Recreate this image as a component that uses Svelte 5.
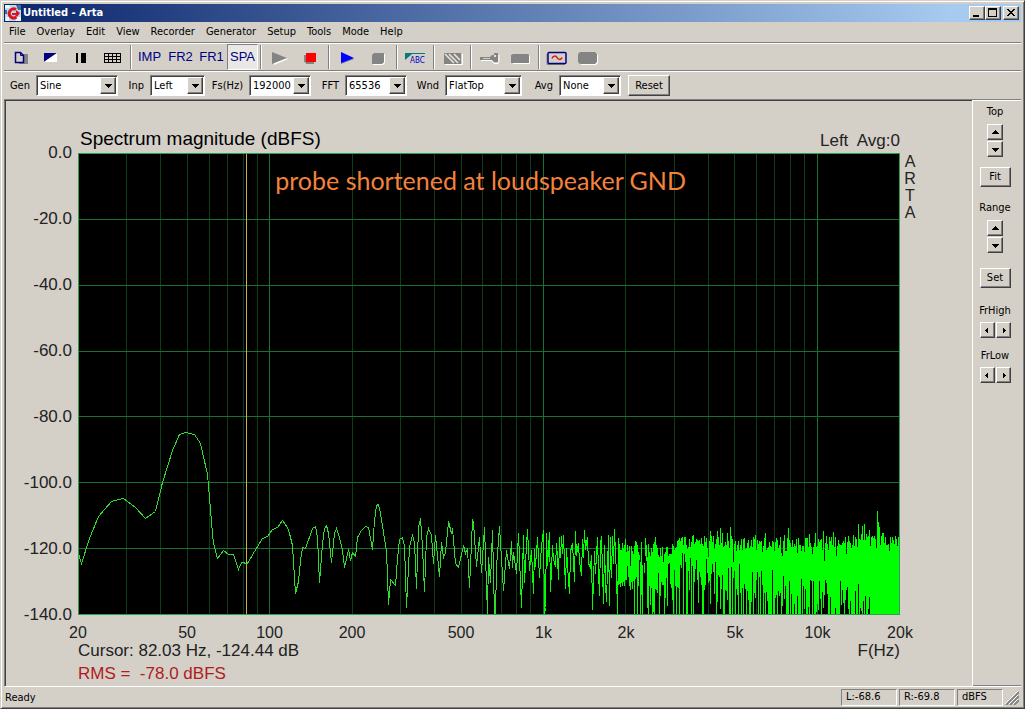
<script lang="ts">
  const menus = ['File', 'Overlay', 'Edit', 'View', 'Recorder', 'Generator', 'Setup', 'Tools', 'Mode', 'Help'];

  const combos = [
    { id: 'gen', label: 'Gen', options: ['Sine', 'Two Sine', 'Pink PN', 'White PN'] },
    { id: 'inp', label: 'Inp', options: ['Left', 'Right'] },
    { id: 'fs', label: 'Fs(Hz)', options: ['192000', '96000', '48000', '44100'] },
    { id: 'fft', label: 'FFT', options: ['65536', '32768', '16384'] },
    { id: 'wnd', label: 'Wnd', options: ['FlatTop', 'Hanning', 'Uniform'] },
    { id: 'avg', label: 'Avg', options: ['None', 'Linear', 'Exp'] },
  ];

  let mode = $state('SPA');

  const W = 821;
  const H = 461;

  const freqX = (f: number) => (Math.log10(f / 20) / 3) * W;

  const yTicks = ['0.0', '-20.0', '-40.0', '-60.0', '-80.0', '-100.0', '-120.0', '-140.0'];
  const xTicks = [
    { f: 20, text: '20' },
    { f: 50, text: '50' },
    { f: 100, text: '100' },
    { f: 200, text: '200' },
    { f: 500, text: '500' },
    { f: 1000, text: '1k' },
    { f: 2000, text: '2k' },
    { f: 5000, text: '5k' },
    { f: 10000, text: '10k' },
    { f: 20000, text: '20k' },
  ];

  const gridFreqs: number[] = [];
  for (const decade of [10, 100, 1000, 10000]) {
    for (let n = 1; n < 10; n++) {
      const f = n * decade;
      if (f > 20 && f < 20000) gridFreqs.push(f);
    }
  }
  const isDecade = (f: number) => f === 100 || f === 1000 || f === 10000;

  // low frequencies: single bins, in plot units
  const lowTrace =
    '0,400 3,410 11,385 20,363 33,348 40,346 45,345 57,354 67,365 77,358 84,329 94,297 101,281 107,279 116,281 ' +
    '122,290 129,321 134,380 135,390 139,405 145,397 150,401 155,401 160,416 163,409 169,410 176,398 184,385 ' +
    '189,383 194,376 199,374 204,367 209,374 211,380 214,392 217,440 220,428 222,407 224,394 227,395 234,375 ' +
    '237,373 239,384 241,429 244,390 246,375 248,372 250,380 253,409 256,380 258,375 261,384 264,397 266,414 ' +
    '270,396 272,407 274,399 277,403 279,384 283,377 287,373 290,374 294,396 296,367 298,352 300,351 302,360 ' +
    '305,379 308,397 310,451 312,426 317,432 319,405 321,386 324,384 326,392 328,454 331,394 334,381 336,389 ' +
    '338,435 340,374 342,365 344,394 346,438 348,384 350,375 353,382 355,410 357,382 361,423 363,389 365,404 ' +
    '367,399 370,368 373,380 374,375 377,410 380,414 385,392 387,400 389,395 391,434 394,367 395,369 398,413 ' +
    '401,384 403,419 406,374 409,461 410,404 412,429 414,377 416,461 417,461 418,414 421,373 425,437 428,397 ' +
    '431,415 433,388 434,414 435,399 438,420 440,380';

  // dense part before the bins merge into a solid band
  const midTrace =
    '440,380 443,454 445,382 446,429 448,392 449,376 451,417 453,397 455,440 456,396 457,413 459,384 461,424 ' +
    '463,392 465,377 466,461 467,454 468,380 469,412 471,379 472,438 474,392 475,406 477,413 478,390 479,404 ' +
    '480,426 481,384 482,404 483,383 484,400 485,382 487,435 488,395 489,412 491,440 492,398 494,390 496,428 ' +
    '497,378 498,402 500,390 501,408 503,422 504,386 505,404 506,377 507,396 509,384 510,410 512,414 513,402 ' +
    '514,456 516,398 517,420 519,384 520,418 521,442 522,390 523,383 525,450 526,392 527,430 528,448 530,382 ' +
    '531,452 532,384 533,424 534,383 535,410 536,376 537,400 538,420 539,461 540,396';

  // [x, typical top, typical bottom, share of columns that reach the floor]
  const bands = [
    [540, 390, 420, 0.22],
    [562, 395, 412, 0.14],
    [580, 399, 424, 0.2],
    [592, 397, 412, 0.3],
    [606, 389, 408, 0.22],
    [630, 388, 412, 0.22],
    [660, 390, 424, 0.28],
    [690, 391, 428, 0.38],
    [720, 391, 436, 0.45],
    [760, 388, 440, 0.55],
    [790, 385, 446, 0.65],
    [822, 386, 456, 0.85],
  ];

  let seed = 4711;
  function rnd() {
    seed = (seed * 16807) % 2147483647;
    return seed / 2147483647;
  }

  function noisePath() {
    let d = '';
    let b = 0;
    for (let x = 540; x <= W; x++) {
      while (x >= bands[b + 1][0]) b++;
      const [x0, t0, b0, p0] = bands[b];
      const [x1, t1, b1, p1] = bands[b + 1];
      const k = (x - x0) / (x1 - x0);
      let top = t0 + (t1 - t0) * k + (rnd() - 0.5) * 14;
      if (rnd() < 0.24) top -= rnd() * 14;
      if (rnd() < 0.06) top += 12;
      let bottom = b0 + (b1 - b0) * k + (rnd() - 0.4) * 36;
      if (rnd() < 0.25) bottom += 18;
      if (rnd() < p0 + (p1 - p0) * k) bottom = H;
      d += `M${x} ${Math.round(top)}V${Math.round(Math.min(H, bottom))}`;
    }
    return d + 'M799 357V400M800 368V400M801 373V400M710 374V400';
  }
  const noise = noisePath();

  const cursorX = freqX(82.03);
</script>

{#snippet arrow(dir: string)}
  <svg class="arrow" viewBox="0 0 7 7" width="7" height="7" shape-rendering="crispEdges" aria-hidden="true">
    {#if dir === 'up'}
      <path d="M3 1h1v1h1v1h1v1h1v1H0V4h1V3h1V2h1z" />
    {:else if dir === 'down'}
      <path d="M0 2h7v1H6v1H5v1H4v1H3V5H2V4H1V3H0z" />
    {:else if dir === 'left'}
      <path d="M1 3h1V2h1V1h1v5H3V5H2V4H1z" />
    {:else}
      <path d="M3 1h1v1h1v1h1v1H5v1H4v1H3z" />
    {/if}
  </svg>
{/snippet}

<div class="window">
  <header class="titlebar">
    <svg class="logo" viewBox="0 0 16 16" width="16" height="16" aria-hidden="true">
      <rect width="16" height="16" fill="#b8dcea" />
      <path d="M0 0h5v3H0zM11 12h5v4h-5zM1 12h3v4H1z" fill="#eef8fc" />
      <path d="M11 0h5v5h-3zM0 5h2v4H0z" fill="#3b6d9c" />
      <path d="M11 4.500A4.500 4.500 0 1 0 11.500 12" fill="none" stroke="#e01020" stroke-width="3" />
      <path d="M7 8h4V5l4 3-3 4-2-2H7z" fill="#e01020" />
    </svg>
    <h1>Untitled - Arta</h1>
    <div class="sysbuttons">
      <button type="button" aria-label="Minimize">
        <svg viewBox="0 0 12 10" width="12" height="10" shape-rendering="crispEdges"><path d="M2 7h6v2H2z" /></svg>
      </button>
      <button type="button" aria-label="Maximize">
        <svg viewBox="0 0 12 10" width="12" height="10" shape-rendering="crispEdges"><path d="M1 0h9v9H1zM2 2v6h7V2z" fill-rule="evenodd" /></svg>
      </button>
      <button type="button" class="close" aria-label="Close">
        <svg viewBox="0 0 12 10" width="12" height="10" shape-rendering="crispEdges">
          <path d="M2 1h2v1h1v1h2V2h1V1h2v1H9v1H8v1H7v1h1v1h1v1h1v1H8V7H7V6H5v1H4v1H2V7h1V6h1V5h1V4H4V3H3V2H2z" />
        </svg>
      </button>
    </div>
  </header>

  <nav class="menubar">
    {#each menus as item}
      <button type="button">{item}</button>
    {/each}
  </nav>

  <div class="toolbar">
    <button type="button" aria-label="Copy">
      <svg viewBox="0 0 24 16" width="24" height="16">
        <path d="M11 4h9v10h-9z" fill="#848484" />
        <path d="M7.500 2.500h5l3 3v7h-8z" fill="#d4d0c8" stroke="#000080" stroke-width="1.500" />
        <path d="M12.500 2.500v3h3" fill="none" stroke="#000080" />
      </svg>
    </button>
    <button type="button" aria-label="Black and white colors">
      <svg viewBox="0 0 24 16" width="24" height="16">
        <path d="M5 3h13L5 12z" fill="#000080" />
        <path d="M18 3v9H5z" fill="#fff" />
      </svg>
    </button>
    <button type="button" aria-label="Line width">
      <svg viewBox="0 0 24 16" width="24" height="16" shape-rendering="crispEdges">
        <path d="M6 3h2v10H6zM11 3h5v10h-5z" />
      </svg>
    </button>
    <button type="button" aria-label="Grid">
      <svg viewBox="0 0 24 16" width="24" height="16" shape-rendering="crispEdges">
        <path d="M3.500 3.500h16v9h-16zM3.500 6.500h16M3.500 9.500h16M7.500 3.500v9M11.500 3.500v9M15.500 3.500v9" fill="none" stroke="#000" />
      </svg>
    </button>
    <i class="sep"></i>
    {#each ['IMP', 'FR2', 'FR1', 'SPA'] as m}
      <button type="button" class="mode" class:pressed={mode === m} onclick={() => (mode = m)}>{m}</button>
    {/each}
    <i class="sep"></i>
    <button type="button" aria-label="Record">
      <svg viewBox="0 0 24 16" width="24" height="16">
        <path d="M5 3l15 6-14 6z" fill="#fff" />
        <path d="M4 2l15 6-15 6z" fill="#848484" />
      </svg>
    </button>
    <button type="button" aria-label="Stop">
      <svg viewBox="0 0 24 16" width="24" height="16" shape-rendering="crispEdges">
        <path d="M5 5h10v9H7l-2-2z" fill="#848484" />
        <path d="M7 3h10v9H7z" fill="#f00" />
      </svg>
    </button>
    <i class="sep"></i>
    <button type="button" aria-label="Generator on">
      <svg viewBox="0 0 24 16" width="24" height="16">
        <path d="M5 3l13 6-13 5z" fill="#7478a8" />
        <path d="M5 2l13 6-13 5z" fill="#00f" />
      </svg>
    </button>
    <button type="button" aria-label="Generator off">
      <svg viewBox="0 0 24 16" width="24" height="16">
        <path d="M8 4h10v9l-2 2H6v-1h9l2-2V5z" fill="#fff" />
        <path d="M7 3h10v9l-2 2H5V5z" fill="#848484" />
      </svg>
    </button>
    <i class="sep"></i>
    <button type="button" aria-label="Legend">
      <svg viewBox="0 0 24 16" width="24" height="16">
        <path d="M1 3h20v1H8l-7 6z" fill="#007c7c" />
        <text x="6" y="13" class="abc">ABC</text>
      </svg>
    </button>
    <i class="sep"></i>
    <button type="button" aria-label="Overlay">
      <svg viewBox="0 0 24 16" width="24" height="16">
        <path d="M4 14.500h17.500V4" stroke="#fff" fill="none" />
        <path d="M3 3h17v11H3z" fill="#848484" />
        <path d="M4 4l9 9M8 4l9 9M13 4l6 6" stroke="#e8e6e0" stroke-width="1.500" />
        <path d="M3 7l7 7H3z" fill="#848484" />
      </svg>
    </button>
    <i class="sep"></i>
    <button type="button" aria-label="Level">
      <svg viewBox="0 0 24 16" width="24" height="16">
        <path d="M3 10.500h11l2 3h4l1-2V5" stroke="#fff" fill="none" />
        <path d="M2 7h10l2-2h2V3h4v9h-4l-2-2H2z" fill="#848484" />
        <path d="M5 8.500h7" stroke="#d4d0c8" />
        <circle cx="17" cy="6" r="1" fill="#fff" />
      </svg>
    </button>
    <button type="button" aria-label="Calibrate">
      <svg viewBox="0 0 24 16" width="24" height="16">
        <path d="M4 5h16l1 2v7H4z" fill="#fff" />
        <path d="M2 5l2-1h15l1 1v8H2z" fill="#848484" />
      </svg>
    </button>
    <i class="sep"></i>
    <button type="button" aria-label="Signal generator setup">
      <svg viewBox="0 0 24 16" width="24" height="16">
        <path d="M1 4v10.500h18" stroke="#848484" fill="none" />
        <rect x="2" y="2.500" width="18" height="11" rx="1" fill="#d4d0c8" stroke="#000080" stroke-width="1.500" />
        <path d="M6 8.500c1-3 4-3 5-1s4 3 5 0" fill="none" stroke="#e01010" stroke-width="1.500" />
      </svg>
    </button>
    <button type="button" aria-label="Recorder setup">
      <svg viewBox="0 0 24 16" width="24" height="16">
        <path d="M4 3h15l2 2v8l-2 2H4z" fill="#fff" />
        <path d="M1 4l2-2h15l2 2v8l-2 2H3l-2-2z" fill="#848484" />
      </svg>
    </button>
  </div>

  <form class="controls">
    {#each combos as c}
      <label for={c.id}>{c.label}</label>
      <span class="combo">
        <select id={c.id}>
          {#each c.options as o}
            <option>{o}</option>
          {/each}
        </select>
        <span class="drop">{@render arrow('down')}</span>
      </span>
    {/each}
    <button type="reset" class="push">Reset</button>
  </form>

  <div class="work">
    <main class="chart">
      <div class="chart-head">
        <h2>Spectrum magnitude (dBFS)</h2>
        <span class="channel">Left&nbsp; Avg:0</span>
      </div>

      <div class="y-axis">
        {#each yTicks as t}
          <span>{t}</span>
        {/each}
      </div>

      <div class="plot">
        <svg viewBox="0 0 822 462" preserveAspectRatio="none" shape-rendering="crispEdges" role="img" aria-label="Spectrum magnitude">
          <rect width="822" height="462" fill="#000" />
          <g transform="translate(0.5 0.5)" fill="none">
            {#each gridFreqs as f}
              <line class="minor" class:major={isDecade(f)} x1={Math.round(freqX(f))} x2={Math.round(freqX(f))} y1="0" y2={H} />
            {/each}
            {#each yTicks as _, i}
              <line class="major" x1="0" x2={W} y1={Math.round((i * H) / 7)} y2={Math.round((i * H) / 7)} />
            {/each}
            <line class="marker" x1={Math.round(cursorX)} x2={Math.round(cursorX)} y1="0" y2={H} />
            <polyline class="low" points={lowTrace} />
            <polyline class="band" points={midTrace} />
            <path class="band" d={noise} />
            <rect class="frame" width={W} height={H} />
          </g>
        </svg>
        <p class="note">probe shortened at loudspeaker GND</p>
      </div>

      <div class="brand">
        {#each ['A', 'R', 'T', 'A'] as letter}
          <span>{letter}</span>
        {/each}
      </div>

      <div class="x-axis">
        {#each xTicks as t}
          <span style="left: {(freqX(t.f) / W) * 100}%">{t.text}</span>
        {/each}
      </div>

      <div class="readout">
        <span>Cursor: 82.03 Hz, -124.44 dB</span>
        <span class="unit">F(Hz)</span>
      </div>
      <div class="rms">RMS =&nbsp; -78.0 dBFS</div>
    </main>

    <aside class="side">
      <span class="caption">Top</span>
      <div class="spin">
        <button type="button" aria-label="Top up">{@render arrow('up')}</button>
        <button type="button" aria-label="Top down">{@render arrow('down')}</button>
      </div>
      <button type="button" class="push">Fit</button>
      <span class="caption">Range</span>
      <div class="spin">
        <button type="button" aria-label="Range up">{@render arrow('up')}</button>
        <button type="button" aria-label="Range down">{@render arrow('down')}</button>
      </div>
      <button type="button" class="push set">Set</button>
      <span class="caption">FrHigh</span>
      <div class="spin across">
        <button type="button" aria-label="FrHigh left">{@render arrow('left')}</button>
        <button type="button" aria-label="FrHigh right">{@render arrow('right')}</button>
      </div>
      <span class="caption">FrLow</span>
      <div class="spin across">
        <button type="button" aria-label="FrLow left">{@render arrow('left')}</button>
        <button type="button" aria-label="FrLow right">{@render arrow('right')}</button>
      </div>
    </aside>
  </div>

  <footer class="status">
    <span class="ready">Ready</span>
    <span class="cell">L:-68.6</span>
    <span class="cell">R:-69.8</span>
    <span class="cell small">dBFS</span>
    <svg viewBox="0 0 14 14" width="14" height="14" aria-hidden="true">
      <path d="M1 14L14 1M5 14l9-9M9 14l5-5" stroke="#848484" stroke-width="2" />
      <path d="M0 13L13 0M4 13l9-9M8 13l5-5" stroke="#fff" />
    </svg>
  </footer>
</div>

<style>
  :global(body) {
    background: #d4d0c8;
  }
  .window {
    --face: #d4d0c8;
    --shade: #808080;
    --dark: #404040;
    box-sizing: border-box;
    display: flex;
    flex-direction: column;
    min-height: 100vh;
    padding: 2px 2px 0 2px;
    border: 1px solid var(--dark);
    border-top-color: var(--face);
    border-left-color: var(--face);
    box-shadow: inset 1px 1px #fff, inset -1px -1px var(--shade);
    background: var(--face);
    color: #000;
    font: 11px/14px "DejaVu Sans Condensed", "Noto Sans", sans-serif;
  }
  h1,
  h2,
  p {
    margin: 0;
  }
  button,
  select {
    margin: 0;
    font: inherit;
    color: inherit;
    border-radius: 0;
  }
  button {
    display: flex;
    align-items: center;
    justify-content: center;
    padding: 0;
    border: 0;
    background: none;
  }
  svg {
    flex: none;
    display: block;
  }

  .titlebar {
    display: flex;
    align-items: center;
    height: 18px;
    margin: 1px 1px 0;
    padding: 0 2px 0 1px;
    background: linear-gradient(90deg, #0a246a, #a6caf0 93%);
  }
  h1 {
    flex: 1;
    padding-left: 2px;
    color: #fff;
    font-size: 11px;
    line-height: 18px;
    font-weight: bold;
  }
  .sysbuttons {
    display: flex;
  }
  .sysbuttons button {
    width: 16px;
    height: 14px;
  }
  .sysbuttons .close {
    margin-left: 2px;
  }
  .sysbuttons button,
  .push,
  .spin button,
  .drop {
    box-sizing: border-box;
    border: 1px solid;
    border-color: #fff var(--dark) var(--dark) #fff;
    box-shadow: inset -1px -1px var(--shade);
    background: var(--face);
  }

  .menubar {
    display: flex;
    height: 20px;
    margin: 0 1px;
    border-bottom: 1px solid var(--shade);
  }
  .menubar button {
    padding: 0 6px 0 5px;
  }

  .toolbar {
    display: flex;
    height: 26px;
    margin: 0 1px;
    border-top: 1px solid #fff;
    border-bottom: 1px solid var(--shade);
  }
  .toolbar button {
    box-sizing: border-box;
    width: 31px;
    justify-content: flex-start;
    padding: 1px 0 0 4px;
  }
  .toolbar .mode {
    justify-content: center;
    padding: 0;
    color: #000080;
    font: 13px/16px "Liberation Sans", Arial, sans-serif;
  }
  .toolbar .pressed {
    border: 1px solid;
    border-color: var(--shade) #fff #fff var(--shade);
    background: #eae8e4;
  }
  .sep {
    box-sizing: border-box;
    width: 2px;
    margin: 1px 2px;
    border-left: 1px solid var(--shade);
    border-right: 1px solid #fff;
  }
  .abc {
    fill: #0000c8;
    font: 8px "DejaVu Sans Condensed", sans-serif;
  }

  .controls {
    display: grid;
    grid-template-columns: 32px 82px 32px 55px 44px 62px 34px 62px 38px 77px 37px 62px 42px;
    align-items: center;
    height: 27px;
    margin: 0 1px;
    border-top: 1px solid #fff;
  }
  .controls label {
    padding-right: 6px;
    text-align: right;
    white-space: nowrap;
  }
  .combo {
    position: relative;
    box-sizing: border-box;
    height: 21px;
    border: 1px solid;
    border-color: var(--shade) #fff #fff var(--shade);
    box-shadow: inset 1px 1px var(--dark);
    background: #fff;
  }
  .combo select {
    width: 100%;
    height: 19px;
    padding: 0 18px 0 3px;
    border: 0;
    background: none;
    appearance: none;
  }
  .drop {
    position: absolute;
    top: 1px;
    right: 1px;
    bottom: 1px;
    width: 16px;
    display: flex;
    align-items: center;
    justify-content: center;
    pointer-events: none;
  }
  .push {
    height: 20px;
  }
  .controls .push {
    width: 42px;
    height: 21px;
    margin-left: 7px;
  }

  .work {
    flex: 1;
    display: flex;
    margin: 0 1px;
    border-top: 1px solid var(--shade);
  }
  .chart {
    flex: 1;
    display: grid;
    grid-template-columns: 73px 1fr 72px;
    grid-template-rows: 52px minmax(240px, 1fr) 26px 20px 25px;
    box-sizing: border-box;
    border: 1px solid;
    border-color: var(--dark) transparent #fff var(--shade);
    border-right: 0;
    box-shadow: inset 1px 0 var(--dark);
    font: 16px/20px "Liberation Sans", Arial, sans-serif;
  }
  .chart-head {
    grid-column: 2;
    display: flex;
    justify-content: space-between;
    align-items: flex-end;
    padding: 0 0 2px 2px;
  }
  h2 {
    font-size: 19px;
    line-height: 24px;
    font-weight: normal;
  }
  .channel {
    font-size: 17px;
    color: #222;
  }
  .y-axis {
    grid-column: 1;
    grid-row: 2;
    display: flex;
    flex-direction: column;
    justify-content: space-between;
    margin: -10px 0;
    padding-right: 6px;
    text-align: right;
    font-size: 17px;
    color: #222;
  }
  .plot {
    position: relative;
    grid-column: 2;
    grid-row: 2;
  }
  .plot svg {
    position: absolute;
    width: 100%;
    height: 100%;
  }
  .plot line,
  .plot polyline,
  .plot path,
  .frame {
    stroke-width: 1px;
    vector-effect: non-scaling-stroke;
  }
  .minor {
    stroke: #0c3c1a;
  }
  .major {
    stroke: #187030;
  }
  .frame {
    stroke: #28a04c;
  }
  .marker {
    stroke: #c8b440;
  }
  .low {
    stroke: #30dc30;
  }
  .band {
    stroke: #00ff00;
  }
  .note {
    position: absolute;
    left: 24%;
    top: 12px;
    color: #f5823c;
    font: 25px/30px Lato, "Open Sans", sans-serif;
    white-space: nowrap;
  }
  .brand {
    grid-column: 3;
    grid-row: 2;
    display: flex;
    flex-direction: column;
    width: 20px;
    text-align: center;
    line-height: 17px;
    color: #222;
  }
  .x-axis {
    position: relative;
    grid-column: 2;
    grid-row: 3;
    color: #222;
  }
  .x-axis span {
    position: absolute;
    top: 8px;
    transform: translateX(-50%);
  }
  .readout,
  .rms {
    grid-column: 2;
    font-size: 17px;
    color: #222;
  }
  .readout {
    display: flex;
    justify-content: space-between;
  }
  .rms {
    line-height: 25px;
    color: #b01c1c;
  }

  .side {
    display: flex;
    flex-direction: column;
    align-items: center;
    width: 44px;
    padding: 4px 4px 0 0;
    border: 1px solid;
    border-color: #fff transparent #fff #fff;
    border-right: 0;
    box-shadow: inset 0 -1px var(--shade);
  }
  .spin {
    display: flex;
    flex-direction: column;
    gap: 1px;
    margin: 5px 0 10px;
  }
  .spin button {
    width: 16px;
    height: 16px;
  }
  .across {
    flex-direction: row;
    margin: 4px 0 11px;
  }
  .across button {
    width: 15px;
  }
  .side .push {
    width: 31px;
    margin-bottom: 14px;
  }
  .side .set {
    margin: 5px 0 16px;
  }

  .status {
    display: flex;
    align-items: center;
    gap: 2px;
    height: 21px;
    padding-left: 2px;
  }
  .ready {
    flex: 1;
  }
  .cell {
    box-sizing: border-box;
    width: 56px;
    height: 17px;
    padding-left: 4px;
    border: 1px solid;
    border-color: var(--shade) #fff #fff var(--shade);
  }
  .small {
    width: 46px;
  }
  .status svg {
    margin-right: 3px;
  }
</style>
